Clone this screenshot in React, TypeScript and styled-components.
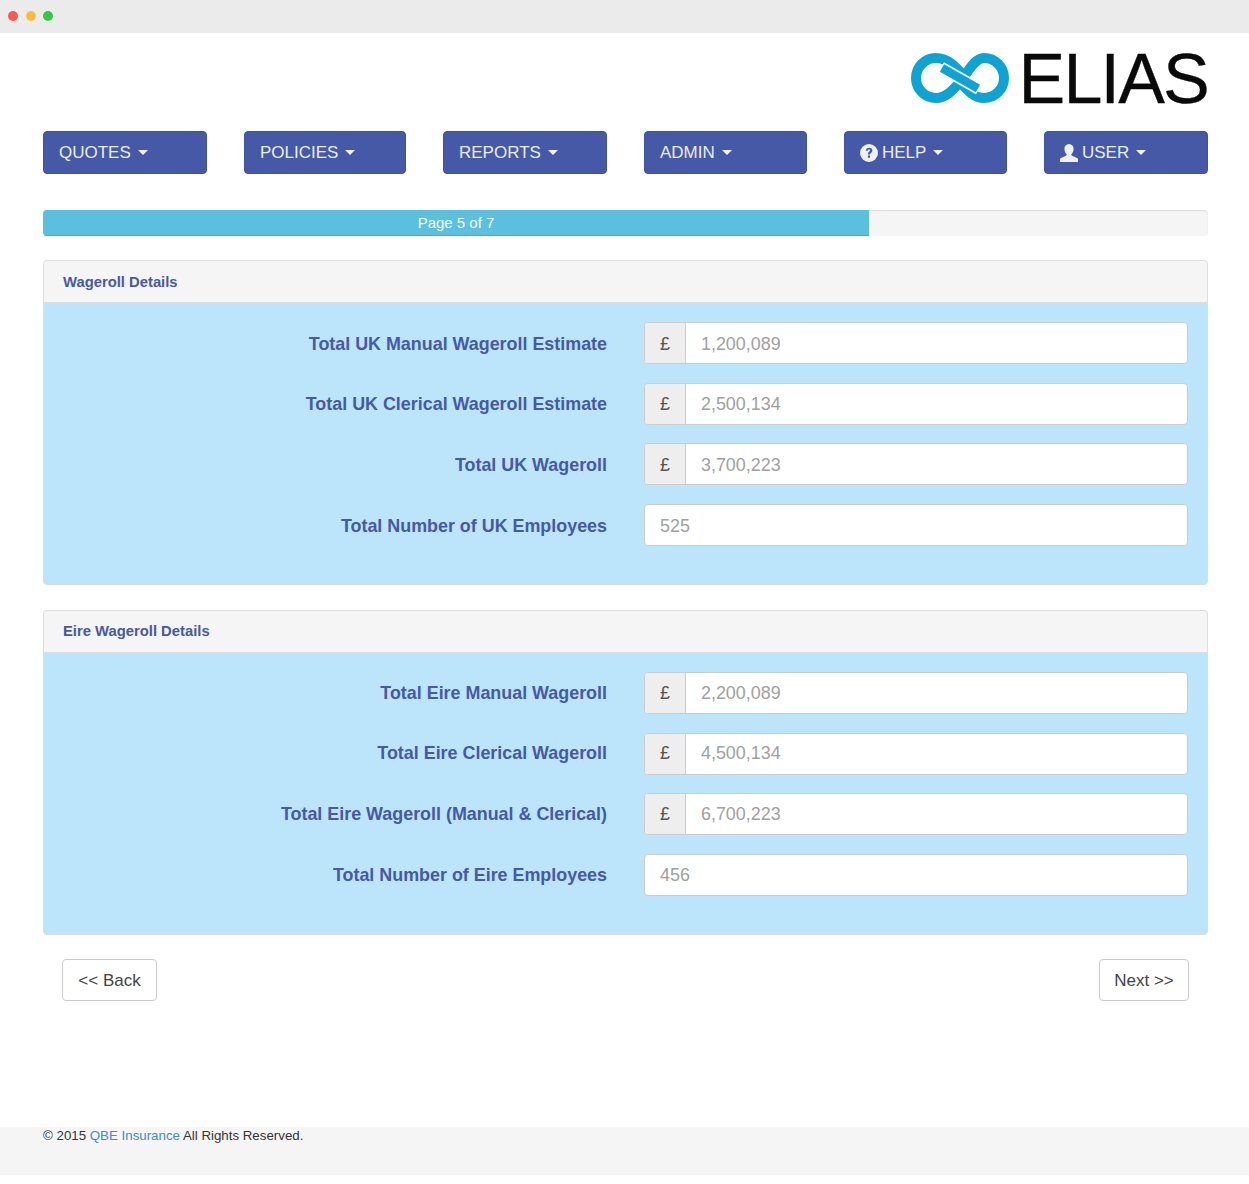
import React from 'react';
import styled, { createGlobalStyle, css } from 'styled-components';

const Global = createGlobalStyle`
  html, body { margin: 0; padding: 0; background: #fff; }
  body { font-family: "Liberation Sans", Arial, sans-serif; color: #333; }
`;
const Page = styled.div`
  width: 1249px; height: 1184px; display: flex; flex-direction: column; overflow: hidden;
`;
const TitleBar = styled.div`
  height: 33px; flex: none; background: #ebebeb; display: flex; align-items: center; gap: 7.5px; padding: 0 0 1px 8px; box-sizing: border-box;
`;
const Dot = styled.span<{ $c: string }>`
  width: 10px; height: 10px; border-radius: 50%; background: ${p => p.$c};
`;
const Main = styled.div`
  flex: none; padding: 0 41px 0 43px; display: flex; flex-direction: column;
`;
const LogoRow = styled.div`
  height: 98px; display: flex; justify-content: flex-end; align-items: flex-start; padding-top: 19px; box-sizing: border-box; gap: 9px;
`;
const Wordmark = styled.span`
  font-size: 70px; line-height: 54px; color: #0a0a0a; letter-spacing: -1.8px; -webkit-text-stroke: 0.3px #0a0a0a;
`;
const Nav = styled.div`
  display: grid; grid-template-columns: 164px 162px 164px 163px 163px 164px; column-gap: 37px;
`;
const NavButton = styled.button`
  height: 43px; background: #4559a7; border: 1px solid #3f539f; border-radius: 4px; color: #e9edf7;
  font: 17px "Liberation Sans", Arial, sans-serif; text-align: left; padding: 0 15px; display: flex; align-items: center; gap: 7px;
`;
const IconText = styled.span`
  display: inline-flex; align-items: center; gap: 4px;
`;
const Caret = styled.span`
  width: 0; height: 0; border-top: 5px solid #eef1f9; border-left: 5px solid transparent; border-right: 5px solid transparent;
`;
const Progress = styled.div`
  margin-top: 36px; height: 26px; background: #f5f5f5; border-radius: 4px; overflow: hidden; box-shadow: inset 0 1px 2px rgba(0,0,0,.1);
`;
const ProgressBar = styled.div`
  height: 100%; background: #5bc0de; border-bottom: 1px solid #4ea9c6; box-sizing: border-box; color: #f4fbfd; font-size: 15px; line-height: 25px; text-align: center;
`;
const PanelHead = styled.div`
  height: 42px; background: #f5f5f5; border-bottom: 1px solid #ddd; box-sizing: border-box; padding: 0 19px; display: flex; align-items: center;
  font-size: 14.8px; font-weight: bold; color: #4559a7;
`;
const PanelBody = styled.div`
  padding: 19px 19px 0; display: flex; flex-direction: column; gap: 18.7px;
`;
const Row = styled.div`
  display: grid; grid-template-columns: 544px 544px; column-gap: 37px; align-items: center;
`;
const Label = styled.label`
  text-align: right; font-size: 17.9px; font-weight: bold; color: #4559a7;
`;
const Group = styled.div`
  display: flex; height: 42px; box-sizing: border-box; border: 1px solid #ccc; border-radius: 4px; overflow: hidden; background: #fff;
`;
const Addon = styled.span`
  width: 41px; flex: none; background: #eee; border-right: 1px solid #ccc; box-sizing: border-box; display: flex; align-items: center; justify-content: center;
  font-size: 18px; color: #555;
`;
const Value = styled.span`
  flex: 1; padding: 0 15px; display: flex; align-items: center; font-size: 17.9px; color: #a0a0a0;
`;
const Panel = styled.section<{ $top: number; $nudge?: boolean }>`
  margin-top: ${p => p.$top}px; border: 1px solid #ddd; border-radius: 4px; overflow: hidden; height: 325px; box-sizing: border-box;
  background: #bce5fc; flex: none;
  ${p => p.$nudge ? css`
    ${Label}, ${Addon}, ${Value} { padding-top: 2px; }
  ` : css`
    ${PanelHead} { padding-bottom: 2px; }
  `}
`;
const Actions = styled.div`
  margin-top: 24px; padding: 0 19px; display: flex; justify-content: space-between;
`;
const PlainButton = styled.button<{ $w: number }>`
  width: ${p => p.$w}px; height: 42px; padding: 2px 0 0; background: #fff; border: 1px solid #ccc; border-radius: 4px; color: #444; font: 17px "Liberation Sans", Arial, sans-serif;
`;
const Footer = styled.footer`
  margin-top: 126px; height: 48px; box-sizing: border-box; padding: 1px 43px 0; background: #f5f5f5; flex: none; font-size: 13.3px; line-height: 16px; color: #333;
`;
const Link = styled.a`
  color: #428bca; text-decoration: none;
`;
const UserIcon = () => (
  <svg width="18" height="18" viewBox="0 0 18 18"><path fill="#eef1f9" d="M9 0c3 0 4.600 2.200 4.600 5 0 2-.8 3.800-2 5-.5.600-.3 1.400.5 1.800L17 14c.7.300 1 .800 1 1.500V18H0v-2.500c0-.700.300-1.200 1-1.500l4.900-2.200c.8-.4 1-1.200.5-1.800-1.200-1.200-2-3-2-5C4.400 2.200 6 0 9 0z" /></svg>
);
const HelpIcon = () => (
  <svg width="18" height="18" viewBox="0 0 18 18"><circle cx="9" cy="9" r="9" fill="#eef1f9" /><path d="M5.800 6.800C5.900 4.800 7.300 3.700 9.200 3.700c1.900 0 3.200 1.100 3.200 2.700 0 2.300-2.400 2.300-2.400 4H7.900c0-2.600 2.200-2.700 2.200-3.800 0-.6-.4-1-1-1-.7 0-1.100.5-1.200 1.200H5.800z M7.900 11.500H10v2.200H7.900z" fill="#4559a7" /></svg>
);
const Logo = () => (
  <svg width="100" height="52" viewBox="0 0 100 52">
    <path fill="none" stroke="#0fa3d4" strokeWidth="10" d="M54 24C46 15 38 6 26 6a20 20 0 0 0 0 40c10 0 17-8 24-16S64 6 74 6a20 20 0 0 1 0 40c-10 0-17-8-24-16" />
    <path fill="none" stroke="#fff" strokeWidth="12" d="M31 15.500 69 37" />
    <path fill="none" stroke="#0fa3d4" strokeWidth="8.500" d="M32 16 68 36.500" />
  </svg>
);
type R = { label: string; value: string; money?: boolean };
const uk: R[] = [
  { label: 'Total UK Manual Wageroll Estimate', value: '1,200,089', money: true },
  { label: 'Total UK Clerical Wageroll Estimate', value: '2,500,134', money: true },
  { label: 'Total UK Wageroll', value: '3,700,223', money: true },
  { label: 'Total Number of UK Employees', value: '525' },
];
const eire: R[] = [
  { label: 'Total Eire Manual Wageroll', value: '2,200,089', money: true },
  { label: 'Total Eire Clerical Wageroll', value: '4,500,134', money: true },
  { label: 'Total Eire Wageroll (Manual & Clerical)', value: '6,700,223', money: true },
  { label: 'Total Number of Eire Employees', value: '456' },
];
const Rows = ({ rows }: { rows: R[] }) => (
  <PanelBody>
    {rows.map(r => (
      <Row key={r.label}>
        <Label>{r.label}</Label>
        <Group>
          {r.money && <Addon>£</Addon>}
          <Value>{r.value}</Value>
        </Group>
      </Row>
    ))}
  </PanelBody>
);
export default function App() {
  return (
    <Page>
      <Global />
      <TitleBar><Dot $c="#fc5753" /><Dot $c="#fdbc40" /><Dot $c="#33c748" /></TitleBar>
      <Main>
        <LogoRow><Logo /><Wordmark>ELIAS</Wordmark></LogoRow>
        <Nav>
          <NavButton>QUOTES <Caret /></NavButton>
          <NavButton>POLICIES <Caret /></NavButton>
          <NavButton>REPORTS <Caret /></NavButton>
          <NavButton>ADMIN <Caret /></NavButton>
          <NavButton><IconText><HelpIcon />HELP</IconText> <Caret /></NavButton>
          <NavButton><IconText><UserIcon />USER</IconText> <Caret /></NavButton>
        </Nav>
        <Progress><ProgressBar style={{ width: '70.9%' }}>Page 5 of 7</ProgressBar></Progress>
        <Panel $top={24} $nudge><PanelHead>Wageroll Details</PanelHead><Rows rows={uk} /></Panel>
        <Panel $top={25}><PanelHead>Eire Wageroll Details</PanelHead><Rows rows={eire} /></Panel>
        <Actions><PlainButton $w={95}>&lt;&lt; Back</PlainButton><PlainButton $w={90}>Next &gt;&gt;</PlainButton></Actions>
      </Main>
      <Footer>© 2015 <Link>QBE Insurance</Link> All Rights Reserved.</Footer>
    </Page>
  );
}
